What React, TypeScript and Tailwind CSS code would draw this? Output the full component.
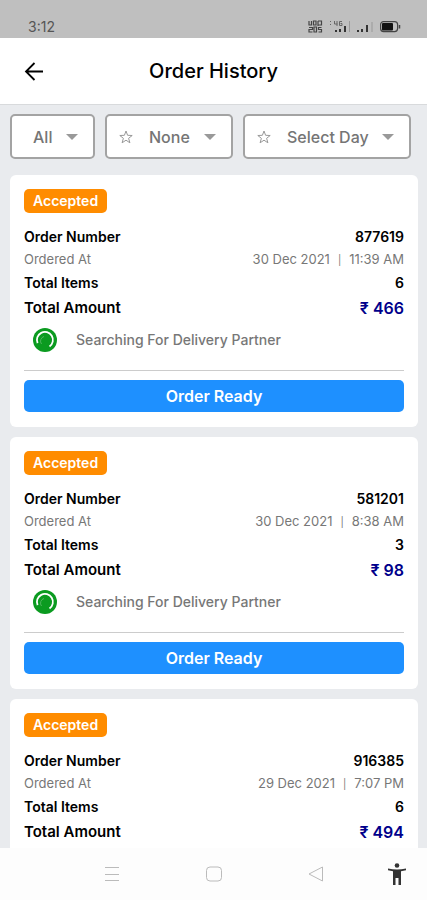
import clsx from "clsx";

type Order = {
  number: string;
  date: string;
  time: string;
  items: number;
  amount: number;
};

const orders: Order[] = [
  { number: "877619", date: "30 Dec 2021", time: "11:39 AM", items: 6, amount: 466 },
  { number: "581201", date: "30 Dec 2021", time: "8:38 AM", items: 3, amount: 98 },
  { number: "916385", date: "29 Dec 2021", time: "7:07 PM", items: 6, amount: 494 },
];

function StatusBar() {
  return (
    <div className="flex h-[38px] shrink-0 items-end justify-between bg-[#bfbfbf] pr-[26px] pb-1 pl-7">
      <span className="text-sm leading-[14px] text-[#555]">3:12</span>
      <svg width="94" height="14" viewBox="0 0 94 14" fill="none" aria-hidden="true">
        <g stroke="#444" strokeWidth="1.2">
          <path d="M2 1v4h2.500V1M6.500 1h2.500v4H6.500zM11 1v5M11 1h3.500v4H11M2 7.500h3.500v2H2v2.500h3.500M7 7v5h2.500V7zM14.500 7.500h-3v2h3v2.500h-3" />
        </g>
        <g stroke="#666" strokeWidth="1">
          <path d="M23.500 1v1M23.500 4v1M27.500 1v3h3M30 1v5M35 1.500h-2.500v4H35v-2h-1.500" />
          <path d="M42.500 1v11" stroke="#999" />
        </g>
        <path d="M28 10h2v2h-2zM32 9h2v3h-2zM37 6h2v6h-2zM50 10h2v2h-2zM54 9h2v3h-2zM59 5h2v7h-2z" fill="#333" />
        <path d="M65 2v10" stroke="#999" />
        <rect x="73.600" y="1.600" width="17" height="10" rx="3" stroke="#444" strokeWidth="1.200" />
        <rect x="75" y="3" width="11" height="7.500" rx="1" fill="#111" />
        <path d="M92.500 5v3.500" stroke="#444" strokeWidth="1.500" />
      </svg>
    </div>
  );
}

function Header() {
  return (
    <header className="grid h-[67px] shrink-0 grid-cols-[48px_1fr_48px] items-center border-b border-[#d8dadc] bg-white">
      <button type="button" aria-label="Back" className="flex justify-end pr-1">
        <svg width="20" height="20" viewBox="0 0 20 20" fill="none" stroke="#000" strokeWidth="1.800">
          <path d="M19 10.500H2M10.500 2L2 10.500l8.500 8.500" />
        </svg>
      </button>
      <h1 className="text-center text-xl font-medium text-black">Order History</h1>
    </header>
  );
}

function Filter({ label, options, star, width }: { label: string; options: string[]; star?: boolean; width: string }) {
  return (
    <div className="relative flex h-[45px] items-center rounded-[5px] border-2 border-[#a3a3a3] bg-white">
      {star && (
        <svg width="14" height="14" viewBox="0 0 14 14" fill="none" stroke="#999" className="ml-3">
          <path d="M7 1l1.600 4.300 4.600.2-3.600 2.800 1.300 4.500L7 10.200l-3.900 2.600 1.300-4.500L.8 5.500l4.600-.2z" />
        </svg>
      )}
      <select
        aria-label={label}
        className={clsx("h-full appearance-none bg-transparent text-base font-medium text-[#757575] outline-none", star ? "pl-4" : "pl-[21px]", width)}
      >
        {options.map((option) => (
          <option key={option}>{option}</option>
        ))}
      </select>
      <svg width="12" height="6" viewBox="0 0 12 6" fill="#999" className="pointer-events-none absolute right-[15px]">
        <path d="M0 0h12L6 6z" />
      </svg>
    </div>
  );
}

function OrderCard({ order }: { order: Order }) {
  return (
    <article className="shrink-0 rounded-md bg-white px-[14px] pt-[14px] pb-[15px]">
      <span className="inline-flex h-6 items-center rounded-[5px] bg-[#ff8c00] px-[9px] align-top text-sm font-semibold text-white">
        Accepted
      </span>
      <dl className="mt-3 text-black">
        <div className="flex h-6 items-center justify-between text-sm font-semibold">
          <dt>Order Number</dt>
          <dd>{order.number}</dd>
        </div>
        <div className="flex h-[22px] items-center justify-between text-[13px] text-[#777]">
          <dt>Ordered At</dt>
          <dd className="flex items-center gap-2">
            <span>{order.date}</span>
            <span className="text-[10px]">|</span>
            <span>{order.time}</span>
          </dd>
        </div>
        <div className="flex h-6 items-center justify-between text-sm font-semibold">
          <dt>Total Items</dt>
          <dd>{order.items}</dd>
        </div>
        <div className="flex h-[26px] items-center justify-between text-[15px] font-semibold">
          <dt>Total Amount</dt>
          <dd className="text-base text-[#00008b]">₹ {order.amount}</dd>
        </div>
      </dl>
      <div className="flex h-[38px] items-center gap-[19px] pl-[9px] text-sm font-medium text-[#777]">
        <svg width="24" height="24" viewBox="0 0 24 24" fill="none" aria-hidden="true">
          <circle cx="12" cy="12" r="12" fill="#0b9b20" />
          <path d="M4.600 15.200A8 8 0 1 1 16.500 18.500" stroke="#fff" strokeWidth="1.800" />
          <path d="M8.500 16A4.800 4.800 0 0 1 11 8.500" stroke="#4fb55d" strokeWidth="1" />
        </svg>
        <span>Searching For Delivery Partner</span>
      </div>
      <hr className="mt-[11px] border-[#ccc]" />
      <button type="button" className="mt-[9px] flex h-8 w-full items-center justify-center rounded-[5px] bg-[#1e90ff] text-base font-semibold text-white">
        Order Ready
      </button>
    </article>
  );
}

function NavBar() {
  return (
    <nav className="relative flex h-[52px] shrink-0 items-center justify-center gap-[86px] bg-[#fdfdfd]">
      <button type="button" aria-label="Recent apps">
        <svg width="16" height="16" viewBox="0 0 16 16" stroke="#bbb">
          <path d="M1 1.500h14M1 8.500h14M1 14.500h14" />
        </svg>
      </button>
      <button type="button" aria-label="Home">
        <svg width="16" height="16" viewBox="0 0 16 16" fill="none" stroke="#bbb">
          <rect x=".5" y="1" width="15" height="14" rx="3.500" />
        </svg>
      </button>
      <button type="button" aria-label="Go back">
        <svg width="16" height="16" viewBox="0 0 16 16" fill="none" stroke="#bbb">
          <path d="M14.500 1v14L1 8z" strokeLinejoin="round" />
        </svg>
      </button>
      <button type="button" aria-label="Accessibility" className="absolute right-[20px]">
        <svg width="20" height="22" viewBox="0 0 20 22" fill="#333">
          <circle cx="10" cy="2.500" r="2.300" />
          <path d="M1 5.500c6 1.300 12 1.300 18 0v1.800l-5 1V22h-2.500v-7h-3v7H6V8.300l-5-1z" />
        </svg>
      </button>
    </nav>
  );
}

export default function App() {
  return (
    <div className="flex h-screen flex-col bg-[#e9ebee] font-['Inter','Liberation_Sans',sans-serif]">
      <StatusBar />
      <Header />
      <main className="flex min-h-0 flex-1 flex-col">
        <div className="flex shrink-0 gap-[10px] px-[10px] pt-[9px] pb-4">
          <Filter label="Order status" options={["All"]} width="w-[81px]" />
          <Filter label="Order type" options={["None"]} star width="w-[98px]" />
          <Filter label="Day" options={["Select Day"]} star width="w-[138px]" />
        </div>
        <div className="flex min-h-0 flex-1 flex-col gap-[10px] overflow-y-auto pr-[9px] pl-[10px] [scrollbar-width:none]">
          {orders.map((order) => (
            <OrderCard key={order.number} order={order} />
          ))}
        </div>
      </main>
      <NavBar />
    </div>
  );
}
